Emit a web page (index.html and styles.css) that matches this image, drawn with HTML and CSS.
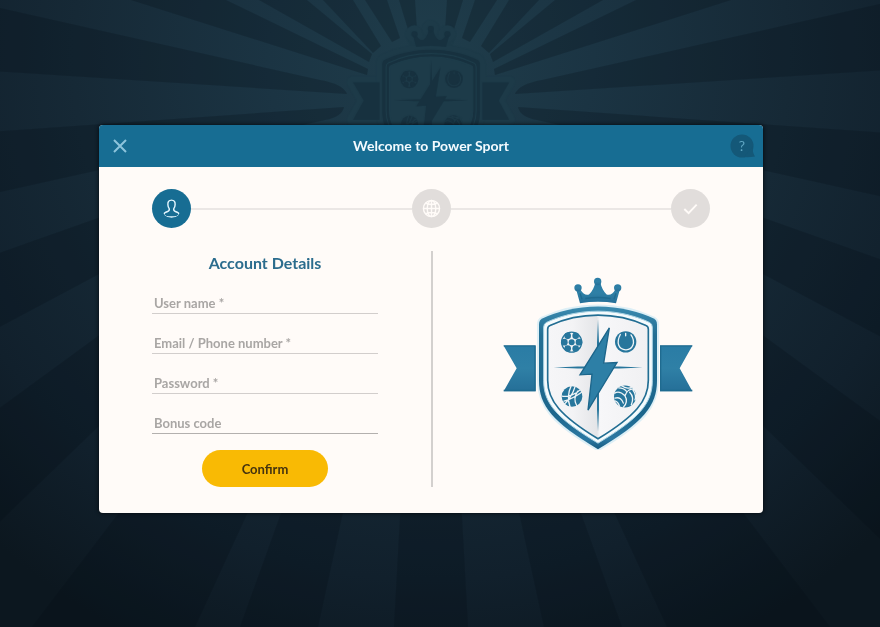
FILE: index.html
```html
<!DOCTYPE html>
<html lang="en">
<head>
  <meta charset="utf-8">
  <meta name="viewport" content="width=device-width, initial-scale=1">
  <title>Power Sport</title>
  <link rel="stylesheet" href="styles.css">
</head>
<body>
  <svg class="backdrop" viewBox="0 0 880 627" preserveAspectRatio="xMidYMin slice" aria-hidden="true">
    <defs>
      <radialGradient id="night" gradientUnits="userSpaceOnUse" cx="431" cy="60" r="650">
        <stop offset="0" stop-color="#1f3d4b"/>
        <stop offset=".25" stop-color="#1b3443"/>
        <stop offset=".55" stop-color="#162936"/>
        <stop offset=".8" stop-color="#11202c"/>
        <stop offset="1" stop-color="#0c171f"/>
      </radialGradient>
      <linearGradient id="teal" x1="0" y1="0" x2="0" y2="1">
        <stop offset="0" stop-color="#2a7ca5"/>
        <stop offset=".5" stop-color="#2f80a6"/>
        <stop offset="1" stop-color="#256f98"/>
      </linearGradient>
      <linearGradient id="rim" x1="0" y1="0" x2="0" y2="1">
        <stop offset="0" stop-color="#3b8bb0"/>
        <stop offset=".2" stop-color="#236f94"/>
        <stop offset=".75" stop-color="#1c668c"/>
        <stop offset=".93" stop-color="#2b78a2"/>
        <stop offset="1" stop-color="#155a80"/>
      </linearGradient>
      <linearGradient id="plate" x1="0" y1="0" x2="1" y2="0">
        <stop offset="0" stop-color="#f6f6f8"/>
        <stop offset=".25" stop-color="#f3f3f5"/>
        <stop offset=".49" stop-color="#e4e5e8"/>
        <stop offset=".52" stop-color="#f7f7f9"/>
        <stop offset="1" stop-color="#f0f0f2"/>
      </linearGradient>
      <g id="rays">
        <path d="M399 0H415L417 30 410 36Z"/>
        <path d="M365 0H387L400 38 392 42Z"/>
        <path d="M323 0H353L381 46 373 53Z"/>
        <path d="M259 0H307L372 54 369 62Z"/>
        <path d="M131 0H226L368 69 367 75Z"/>
        <path d="M-40 -1 320 80Q343 84 347 94L-40 69Z"/>
        <path d="M-40 134 344 107Q342 117 325 120L-40 201Z"/>
        <path d="M-40 267 360 125 370 130-40 348Z"/>
        <path d="M-40 437 380 130 395 140-40 560Z"/>
        <path d="M32 627H195L410 160 395 150Z"/>
        <path d="M240 627H318L422 150 412 150Z"/>
      </g>
      <g id="emblem-trim">
        <path d="M38 240H134V376H38L77 307ZM507 240H604L566 307 604 376H507Z"/>
        <path d="M267 112 254 66 268 71Q280 91 294 86 308 73 313 50H328Q333 73 347 86 362 91 373 71L388 66 375 112Q321 104 267 112Z"/>
        <circle cx="261" cy="66" r="11"/><circle cx="320" cy="47" r="11"/><circle cx="380" cy="66" r="11"/>
      </g>
      <path id="emblem-outer" d="M321 122C385 122 445 138 488 158Q498 163 498 176V345C498 420 457 470 321 550 185 470 144 420 144 345V176Q144 163 154 158C197 138 257 122 321 122Z"/>
      <path id="emblem-band" d="M321 136C382 136 437 151 476 170Q484 174 484 184V345C484 412 445 458 321 532 197 458 158 412 158 345V184Q158 174 166 170C205 151 260 136 321 136Z"/>
      <path id="emblem-inner" d="M321 148C378 148 428 162 465 179Q472 182 472 190V343C472 404 434 450 321 519 208 450 170 404 170 343V190Q170 182 177 179C214 162 264 148 321 148Z"/>
      <path id="emblem-cross" d="M321 160 324 230V430L321 497 318 430V230ZM188 305 260 302H385L455 305 385 308H260Z"/>
      <path id="emblem-bolt" d="M355 186 267 327 303 325 291 433 378 290 338 292Z"/>
      <g id="emblem-balls">
        <path d="M242 197A32 32 0 1 0 242 261A32 32 0 1 0 242 197ZM242 201A28 28 0 1 1 242 257A28 28 0 1 1 242 201Z"/>
        <circle cx="242" cy="229" r="9"/><circle cx="264" cy="229" r="10"/><circle cx="220" cy="229" r="10"/>
        <circle cx="230" cy="210" r="10"/><circle cx="254" cy="210" r="10"/><circle cx="230" cy="248" r="10"/><circle cx="254" cy="248" r="10"/>
        <circle cx="404" cy="228" r="32"/><circle cx="243" cy="392" r="31"/><circle cx="402" cy="392" r="33"/>
      </g>
      <g id="emblem-seams" fill="none" stroke-linecap="round">
        <path d="M388 206C374 232 384 251 404 252S436 230 420 207M404 203V210"/>
        <path d="M213 391C230 394 255 386 267 372M240 361C231 380 231 405 237 423M252 363C246 385 228 408 221 414M260 376C249 393 250 407 257 419M271 380C254 392 234 402 219 406"/>
        <path d="M402 390C391 379 379 377 371 382M402 390C407 375 418 367 431 371M402 390C409 401 407 416 397 424M392 360C406 371 412 367 421 365M372 397C385 392 394 402 397 412M416 379C425 388 427 403 421 417M383 366C395 366 403 372 406 376M426 373C434 383 435 396 432 402M385 420C382 411 376 406 372 405"/>
      </g>
    </defs>
    <rect width="880" height="627" fill="url(#night)"/>
    <g class="ray-shade">
      <use href="#rays"/>
      <use href="#rays" transform="matrix(-1 0 0 1 862 0)"/>
      <path d="M420 150H442L468 627H394Z"/>
    </g>
    <g class="watermark" transform="translate(342.4 16) scale(.276)">
      <g class="wm-halo"><use href="#emblem-trim"/><use href="#emblem-outer"/></g>
      <g class="wm-dark"><use href="#emblem-trim"/><use href="#emblem-outer"/></g>
      <use class="wm-band" href="#emblem-band"/>
      <use class="wm-inner" href="#emblem-inner"/>
      <g class="wm-dark"><use href="#emblem-cross"/><use href="#emblem-bolt"/><use href="#emblem-balls"/></g>
      <use class="wm-seams" href="#emblem-seams"/>
    </g>
  </svg>

  <main class="page">
    <section class="dialog" role="dialog" aria-labelledby="dialog-title">
      <header class="dialog-header">
        <button class="icon-button" type="button" aria-label="Close">
          <svg class="close-icon" viewBox="0 0 14 14" aria-hidden="true"><path d="M1 1 13 13M13 1 1 13"/></svg>
        </button>
        <h1 class="dialog-title" id="dialog-title">Welcome to Power Sport</h1>
        <button class="icon-button help" type="button" aria-label="Help">
          <svg class="help-bubble" viewBox="0 0 26 24" aria-hidden="true">
            <circle cx="13" cy="12" r="11.500"/><path d="M24 12Q23 18 26 22.500 20 23.500 15 23Z"/>
          </svg>
          <span class="help-mark">?</span>
        </button>
      </header>

      <ol class="steps">
        <li class="step step-current" aria-label="Account" aria-current="step">
          <svg class="step-icon" viewBox="0 0 20 20" aria-hidden="true">
            <path d="M10 1.200C7 1.200 6 3.200 6.200 6 6.300 8 7 9.300 7.600 10.200 8 12 7.500 12.700 6 13.200 3.500 14 1.800 14.800 2 16.200 2.600 18 6 19 10 19S17.400 18 18 16.200C18.200 14.800 16.500 14 14 13.200 12.500 12.700 12 12 12.400 10.200 13 9.300 13.700 8 13.800 6 14 3.200 13 1.200 10 1.200Z"/>
          </svg>
        </li>
        <li class="step" aria-label="Location">
          <svg class="step-icon" viewBox="0 0 20 20" aria-hidden="true">
            <circle cx="10" cy="10" r="8.500"/><path d="M10 1.500V18.500M1.500 10H18.500M4 4.500Q10 7 16 4.500M4 15.500Q10 13 16 15.500"/><ellipse cx="10" cy="10" rx="4.500" ry="8.500"/>
          </svg>
        </li>
        <li class="step" aria-label="Done">
          <svg class="step-icon step-check" viewBox="0 0 20 20" aria-hidden="true"><path d="M3.500 10.500 8 15 16.500 6"/></svg>
        </li>
      </ol>

      <div class="columns">
        <form class="account">
          <h2 class="account-title">Account Details</h2>
          <div class="fields">
            <div class="field"><input id="user" type="text" placeholder=" "><label for="user">User name *</label></div>
            <div class="field"><input id="contact" type="text" placeholder=" "><label for="contact">Email / Phone number *</label></div>
            <div class="field"><input id="password" type="password" placeholder=" "><label for="password">Password *</label></div>
            <div class="field field-last"><input id="bonus" type="text" placeholder=" "><label for="bonus">Bonus code</label></div>
          </div>
          <button class="confirm" type="submit">Confirm</button>
        </form>
        <div class="brand">
          <svg class="emblem" viewBox="36 34 570 518" role="img" aria-label="Power Sport">
            <g class="em-trim"><use href="#emblem-trim"/></g>
            <path class="em-fold" d="M38 240H134M507 240H604M132 240V376M509 240V376M38 374H134M507 374H604"/>
            <path class="em-fold" d="M273 100 267 82M369 100 375 82M283 98Q321 92 359 98"/>
            <use class="em-glow" href="#emblem-outer"/>
            <use class="em-outer" href="#emblem-outer"/>
            <use class="em-band" href="#emblem-band"/>
            <use class="em-inner" href="#emblem-inner"/>
            <use class="em-mark" href="#emblem-cross"/>
            <use class="em-mark" href="#emblem-balls"/>
            <use class="em-seams" href="#emblem-seams"/>
            <use class="em-bolt" href="#emblem-bolt"/>
          </svg>
        </div>
      </div>
    </section>
  </main>
</body>
</html>
```
FILE: styles.css
```css
* {
  box-sizing: border-box;
}

body {
  margin: 0;
  min-height: 100vh;
  background: #0c161e;
  font-family: Lato, "Open Sans", sans-serif;
}

button,
input {
  font: inherit;
}

.backdrop {
  position: fixed;
  inset: 0;
  z-index: -1;
  width: 100%;
  height: 100%;
}

.ray-shade {
  fill: #081018;
  opacity: .24;
}

.wm-halo {
  fill: #1d3a48;
  stroke: #1d3a48;
  stroke-width: 44;
  stroke-linejoin: round;
}

.wm-dark {
  fill: #17313f;
}

.wm-band {
  fill: #17313f;
  stroke: #1e3d4b;
  stroke-width: 4;
}

.wm-inner {
  fill: #1d3b49;
  stroke: #1e3d4b;
  stroke-width: 4;
}

.wm-seams {
  stroke: #1d3a48;
  stroke-width: 4;
}

.page {
  padding: 125px 117px 40px 99px;
}

.dialog {
  overflow: hidden;
  border-radius: 4px;
  background: #fffbf8;
  box-shadow: 0 0 4px #04090e;
}

.dialog-header {
  display: flex;
  align-items: center;
  justify-content: space-between;
  height: 42px;
  padding: 0 8px;
  background: #176d93;
}

.dialog-title {
  margin: 0;
  color: #f4fbff;
  font-size: 14px;
  font-weight: 700;
  line-height: 20px;
}

.icon-button {
  display: grid;
  place-items: center;
  width: 26px;
  height: 26px;
  padding: 0;
  border: 0;
  background: none;
  cursor: pointer;
}

.close-icon {
  width: 14px;
  height: 14px;
  fill: none;
  stroke: #8cc4dc;
  stroke-width: 2;
}

.help > * {
  grid-area: 1 / 1;
}

.help-bubble {
  width: 26px;
  height: 24px;
  fill: #145878;
}

.help-mark {
  color: #5fa5c2;
  font-size: 14px;
  line-height: 20px;
}

.steps {
  display: flex;
  justify-content: space-between;
  margin: 0;
  padding: 22px 53px 23px;
  list-style: none;
}

.step {
  display: flex;
  flex: 1;
  align-items: center;
}

.step:last-child {
  flex: none;
}

.step:not(:last-child)::after {
  content: "";
  flex: 1;
  height: 2px;
  background: #ebe7e5;
}

.step-icon {
  width: 39px;
  height: 39px;
  padding: 10px;
  border-radius: 50%;
  background: #e1dddb;
  fill: none;
  stroke: #fffbf8;
  stroke-width: 1.5;
}

.step-current .step-icon {
  background: #176d93;
  stroke: #e4f7ff;
}

.step-check {
  stroke-width: 2;
}

.columns {
  display: grid;
  grid-template-columns: 1fr 1fr;
  padding-bottom: 26px;
}

.account {
  display: flex;
  flex-direction: column;
  align-items: center;
  padding: 0 53px;
}

.account-title {
  margin: 0 0 7px;
  color: #2b6c8d;
  font-size: 16px;
  font-weight: 700;
  line-height: 24px;
}

.fields {
  display: grid;
  gap: 8px;
  width: 100%;
  margin-bottom: 16px;
}

.field {
  display: grid;
  height: 32px;
  border-bottom: 1px solid #d2cecc;
}

.field-last {
  border-color: #b3b0ae;
}

.field > * {
  grid-area: 1 / 1;
}

.field input {
  width: 100%;
  min-width: 0;
  padding: 10px 2px 0;
  border: 0;
  outline: 0;
  background: none;
  color: #4c4a49;
  font-size: 13px;
}

.field label {
  align-self: end;
  padding-left: 2px;
  color: #a9a6a4;
  font-size: 13px;
  font-weight: 700;
  line-height: 20px;
  pointer-events: none;
}

.field input:not(:placeholder-shown) + label {
  visibility: hidden;
}

.confirm {
  width: 126px;
  height: 37px;
  border: 0;
  border-radius: 19px;
  background: #f9ba04;
  color: #45330f;
  font-size: 13px;
  font-weight: 700;
  cursor: pointer;
}

.brand {
  display: grid;
  place-items: center;
  padding-bottom: 12px;
  border-left: 2px solid #d3d0ce;
}

.emblem {
  width: 190px;
  height: 173px;
}

.em-trim {
  fill: url(#teal);
}

.em-fold {
  fill: none;
  stroke: #1f6b90;
  stroke-width: 4;
}

.em-glow {
  fill: none;
  stroke: #ddeff6;
  stroke-width: 12;
}

.em-outer {
  fill: url(#rim);
}

.em-band {
  fill: #f5fbfd;
  stroke: #a9d3e4;
  stroke-width: 3;
}

.em-inner {
  fill: url(#plate);
  stroke: #226e93;
  stroke-width: 5;
}

.em-mark {
  fill: #27769c;
}

.em-seams {
  stroke: #eef4f7;
  stroke-width: 4;
}

.em-bolt {
  fill: #2d7fa6;
  stroke: #1d668b;
  stroke-width: 4;
}
```
